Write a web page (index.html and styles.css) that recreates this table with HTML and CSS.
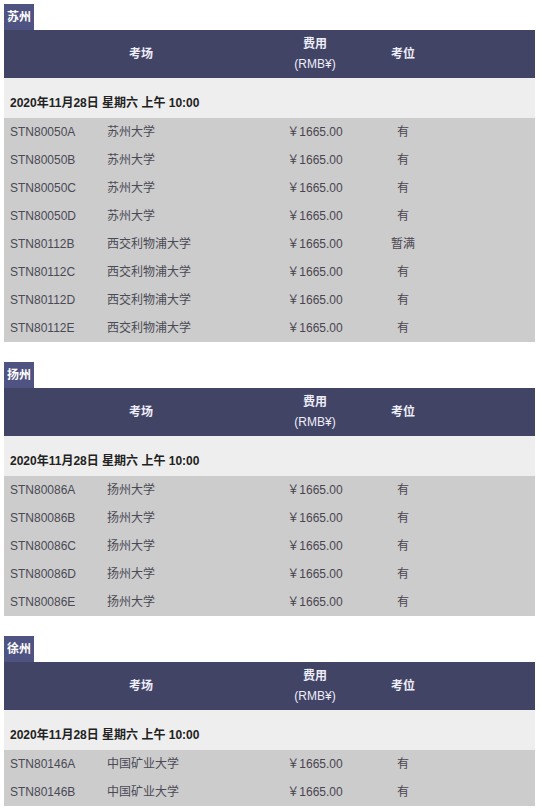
FILE: index.html
```html
<!DOCTYPE html>
<html lang="zh-CN">
<head>
<meta charset="utf-8">
<title>考场</title>
<link rel="stylesheet" href="styles.css">
</head>
<body>
<section class="city">
  <div class="city-tag">苏州</div>
  <table class="sched">
    <colgroup><col class="c-code"><col class="c-name"><col class="c-fee"><col class="c-seat"><col class="c-rest"></colgroup>
    <thead>
      <tr><th colspan="2">考场</th><th>费用<br><span class="unit">(RMB¥)</span></th><th>考位</th><th></th></tr>
    </thead>
    <tbody>
      <tr class="date"><td colspan="5">2020年11月28日 星期六 上午 10:00</td></tr>
      <tr><td>STN80050A</td><td>苏州大学</td><td class="ctr">￥1665.00</td><td class="ctr">有</td><td></td></tr>
      <tr><td>STN80050B</td><td>苏州大学</td><td class="ctr">￥1665.00</td><td class="ctr">有</td><td></td></tr>
      <tr><td>STN80050C</td><td>苏州大学</td><td class="ctr">￥1665.00</td><td class="ctr">有</td><td></td></tr>
      <tr><td>STN80050D</td><td>苏州大学</td><td class="ctr">￥1665.00</td><td class="ctr">有</td><td></td></tr>
      <tr><td>STN80112B</td><td>西交利物浦大学</td><td class="ctr">￥1665.00</td><td class="ctr">暂满</td><td></td></tr>
      <tr><td>STN80112C</td><td>西交利物浦大学</td><td class="ctr">￥1665.00</td><td class="ctr">有</td><td></td></tr>
      <tr><td>STN80112D</td><td>西交利物浦大学</td><td class="ctr">￥1665.00</td><td class="ctr">有</td><td></td></tr>
      <tr><td>STN80112E</td><td>西交利物浦大学</td><td class="ctr">￥1665.00</td><td class="ctr">有</td><td></td></tr>
    </tbody>
  </table>
</section>
<section class="city">
  <div class="city-tag">扬州</div>
  <table class="sched">
    <colgroup><col class="c-code"><col class="c-name"><col class="c-fee"><col class="c-seat"><col class="c-rest"></colgroup>
    <thead>
      <tr><th colspan="2">考场</th><th>费用<br><span class="unit">(RMB¥)</span></th><th>考位</th><th></th></tr>
    </thead>
    <tbody>
      <tr class="date"><td colspan="5">2020年11月28日 星期六 上午 10:00</td></tr>
      <tr><td>STN80086A</td><td>扬州大学</td><td class="ctr">￥1665.00</td><td class="ctr">有</td><td></td></tr>
      <tr><td>STN80086B</td><td>扬州大学</td><td class="ctr">￥1665.00</td><td class="ctr">有</td><td></td></tr>
      <tr><td>STN80086C</td><td>扬州大学</td><td class="ctr">￥1665.00</td><td class="ctr">有</td><td></td></tr>
      <tr><td>STN80086D</td><td>扬州大学</td><td class="ctr">￥1665.00</td><td class="ctr">有</td><td></td></tr>
      <tr><td>STN80086E</td><td>扬州大学</td><td class="ctr">￥1665.00</td><td class="ctr">有</td><td></td></tr>
    </tbody>
  </table>
</section>
<section class="city">
  <div class="city-tag">徐州</div>
  <table class="sched">
    <colgroup><col class="c-code"><col class="c-name"><col class="c-fee"><col class="c-seat"><col class="c-rest"></colgroup>
    <thead>
      <tr><th colspan="2">考场</th><th>费用<br><span class="unit">(RMB¥)</span></th><th>考位</th><th></th></tr>
    </thead>
    <tbody>
      <tr class="date"><td colspan="5">2020年11月28日 星期六 上午 10:00</td></tr>
      <tr><td>STN80146A</td><td>中国矿业大学</td><td class="ctr">￥1665.00</td><td class="ctr">有</td><td></td></tr>
      <tr><td>STN80146B</td><td>中国矿业大学</td><td class="ctr">￥1665.00</td><td class="ctr">有</td><td></td></tr>
    </tbody>
  </table>
</section>
</body>
</html>
```
FILE: styles.css
```css
html, body {
  margin: 0;
  padding: 0;
  background: #ffffff;
}
body {
  padding: 4px 6px 0 4px;
  font-family: "Liberation Sans", Arial, "Noto Sans CJK SC", sans-serif;
  font-size: 12px;
  color: #444;
}
.city {
  margin-bottom: 20px;
}
.city-tag {
  display: inline-block;
  vertical-align: top;
  height: 26px;
  line-height: 26px;
  padding: 0 3px;
  background: #4f5382;
  color: #ffffff;
  font-weight: bold;
  font-size: 12px;
}
.sched {
  display: table;
  width: 531px;
  border-collapse: collapse;
  border-spacing: 0;
  table-layout: fixed;
}
.c-code { width: 97px; }
.c-name { width: 177px; }
.c-fee { width: 74px; }
.c-seat { width: 102px; }
.c-rest { width: 81px; }
.sched thead tr {
  background: #414465;
  height: 48px;
}
.sched th {
  color: #eeeefa;
  font-weight: bold;
  font-size: 12px;
  line-height: 20px;
  text-align: center;
  padding: 4px 0;
  vertical-align: middle;
}
.sched th .unit {
  font-weight: normal;
}
.sched tbody tr {
  background: #cccccc;
  height: 28px;
}
.sched td {
  padding: 0 0 0 6px;
  line-height: 16px;
  height: 28px;
  box-sizing: border-box;
  vertical-align: middle;
  white-space: nowrap;
  color: #4a4a55;
}
.sched td.ctr {
  text-align: center;
  padding: 0;
  color: #4a4450;
}
.sched tr.date {
  background: #eeeeee;
  height: 40px;
}
.sched tr.date td {
  height: 40px;
  padding: 17px 0 7px 6px;
  font-weight: bold;
  color: #222;
  font-size: 12px;
}
```
